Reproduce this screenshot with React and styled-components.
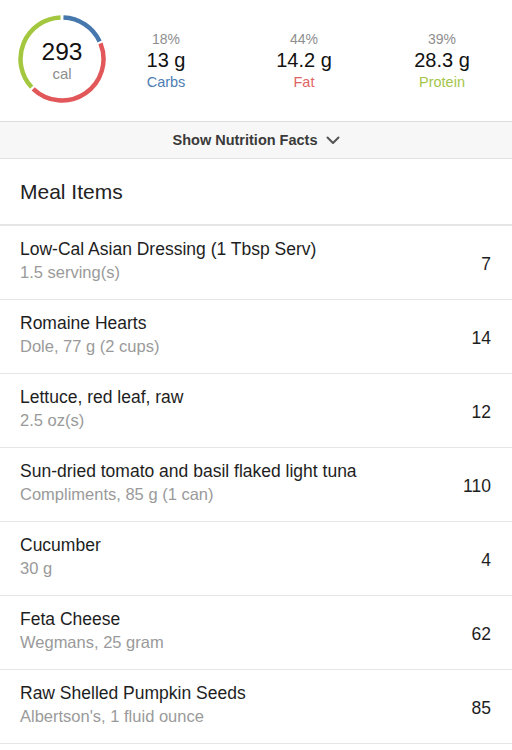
import React from "react";
import styled, { createGlobalStyle } from "styled-components";

const GlobalStyle = createGlobalStyle`
  html, body {
    margin: 0;
    padding: 0;
    background: #fff;
    font-family: "Liberation Sans", Arial, Helvetica, sans-serif;
    -webkit-font-smoothing: antialiased;
  }
`;

const Page = styled.div`
  width: 512px;
  background: #fff;
`;

const Summary = styled.section`
  display: flex;
  align-items: flex-start;
  height: 121px;
  border-bottom: 1px solid #dedede;
`;

const RingBox = styled.div`
  position: relative;
  box-sizing: border-box;
  width: 90px;
  height: 90px;
  padding-top: 4px;
  margin: 14px 0 0 17px;
  display: flex;
  flex-direction: column;
  align-items: center;
  justify-content: center;
  flex-shrink: 0;
`;

const RingSvg = styled.svg`
  position: absolute;
  left: 0;
  top: 0;
`;

const CalNum = styled.span`
  font-size: 24.5px;
  line-height: 26px;
  color: #111;
`;

const CalUnit = styled.span`
  font-size: 15px;
  line-height: 18px;
  color: #8d8d8d;
`;

const MacroGrid = styled.div`
  display: grid;
  grid-template-columns: repeat(3, 118px);
  column-gap: 20px;
  padding-top: 30px;
`;

const MacroCol = styled.div`
  display: flex;
  flex-direction: column;
  align-items: center;
`;

const Pct = styled.span`
  font-size: 14px;
  line-height: 18px;
  color: #8e8e8e;
`;

const Grams = styled.span`
  font-size: 20px;
  line-height: 24px;
  color: #111;
`;

const MacroName = styled.span`
  font-size: 14.5px;
  line-height: 21px;
  color: ${p => p.$color};
`;

const FactsBar = styled.button`
  display: flex;
  width: 100%;
  height: 37px;
  align-items: center;
  justify-content: center;
  gap: 8px;
  background: #f7f7f7;
  border: none;
  border-bottom: 1px solid #e2e2e2;
  font-family: inherit;
  font-size: 14.5px;
  font-weight: 600;
  color: #3a3a3a;
  padding: 0;
`;

const SectionTitle = styled.h2`
  margin: 0;
  height: 65px;
  display: flex;
  align-items: center;
  padding: 0 20px;
  font-size: 21px;
  font-weight: 400;
  color: #222;
  border-bottom: 2px solid #e6e6e6;
`;

const ItemList = styled.ul`
  list-style: none;
  margin: 0;
  padding: 0;
`;

const Item = styled.li`
  display: flex;
  align-items: center;
  justify-content: space-between;
  height: 73px;
  padding: 0 21px 0 20px;
  border-bottom: 1px solid #e6e6e6;
`;

const ItemText = styled.div`
  display: flex;
  flex-direction: column;
  gap: 3px;
  margin-top: -5px;
`;

const ItemName = styled.span`
  font-size: 17.5px;
  line-height: 20px;
  color: #1e1e1e;
`;

const ItemDetail = styled.span`
  font-size: 16.5px;
  line-height: 20px;
  color: #9a9a9a;
`;

const ItemCal = styled.span`
  font-size: 17.5px;
  margin-top: 3px;
  color: #1e1e1e;
`;

const polar = (cx, cy, r, deg) => {
  const a = ((deg - 90) * Math.PI) / 180;
  return [cx + r * Math.cos(a), cy + r * Math.sin(a)];
};

const arc = (from, to) => {
  const [x1, y1] = polar(45, 45, 41.5, from);
  const [x2, y2] = polar(45, 45, 41.5, to);
  const large = to - from > 180 ? 1 : 0;
  return `M ${x1} ${y1} A 41.5 41.5 0 ${large} 1 ${x2} ${y2}`;
};

const Chevron = () => (
  <svg width="14" height="9" viewBox="0 0 14 9">
    <path d="M1.5 1.5 L7 7 L12.5 1.5" fill="none" stroke="#555" strokeWidth="2" strokeLinecap="round" strokeLinejoin="round" />
  </svg>
);

const macros = [
  { pct: "18%", grams: "13 g", name: "Carbs", color: "#4d7db3" },
  { pct: "44%", grams: "14.2 g", name: "Fat", color: "#e06363" },
  { pct: "39%", grams: "28.3 g", name: "Protein", color: "#a4c64a" },
];

const items = [
  { name: "Low-Cal Asian Dressing (1 Tbsp Serv)", detail: "1.5 serving(s)", cal: 7 },
  { name: "Romaine Hearts", detail: "Dole, 77 g (2 cups)", cal: 14 },
  { name: "Lettuce, red leaf, raw", detail: "2.5 oz(s)", cal: 12 },
  { name: "Sun-dried tomato and basil flaked light tuna", detail: "Compliments, 85 g (1 can)", cal: 110 },
  { name: "Cucumber", detail: "30 g", cal: 4 },
  { name: "Feta Cheese", detail: "Wegmans, 25 gram", cal: 62 },
  { name: "Raw Shelled Pumpkin Seeds", detail: "Albertson's, 1 fluid ounce", cal: 85 },
];

export default function App() {
  return (
    <Page>
      <GlobalStyle />
      <Summary>
        <RingBox>
          <RingSvg width="90" height="90" viewBox="0 0 90 90">
            <path d={arc(2, 65)} fill="none" stroke="#4677ad" strokeWidth="4.5" />
            <path d={arc(68, 224)} fill="none" stroke="#e2585a" strokeWidth="4.5" />
            <path d={arc(227, 358)} fill="none" stroke="#a3c83f" strokeWidth="4.5" />
          </RingSvg>
          <CalNum>293</CalNum>
          <CalUnit>cal</CalUnit>
        </RingBox>
        <MacroGrid>
          {macros.map(m => (
            <MacroCol key={m.name}>
              <Pct>{m.pct}</Pct>
              <Grams>{m.grams}</Grams>
              <MacroName $color={m.color}>{m.name}</MacroName>
            </MacroCol>
          ))}
        </MacroGrid>
      </Summary>
      <FactsBar>
        Show Nutrition Facts
        <Chevron />
      </FactsBar>
      <SectionTitle>Meal Items</SectionTitle>
      <ItemList>
        {items.map(it => (
          <Item key={it.name}>
            <ItemText>
              <ItemName>{it.name}</ItemName>
              <ItemDetail>{it.detail}</ItemDetail>
            </ItemText>
            <ItemCal>{it.cal}</ItemCal>
          </Item>
        ))}
      </ItemList>
    </Page>
  );
}
